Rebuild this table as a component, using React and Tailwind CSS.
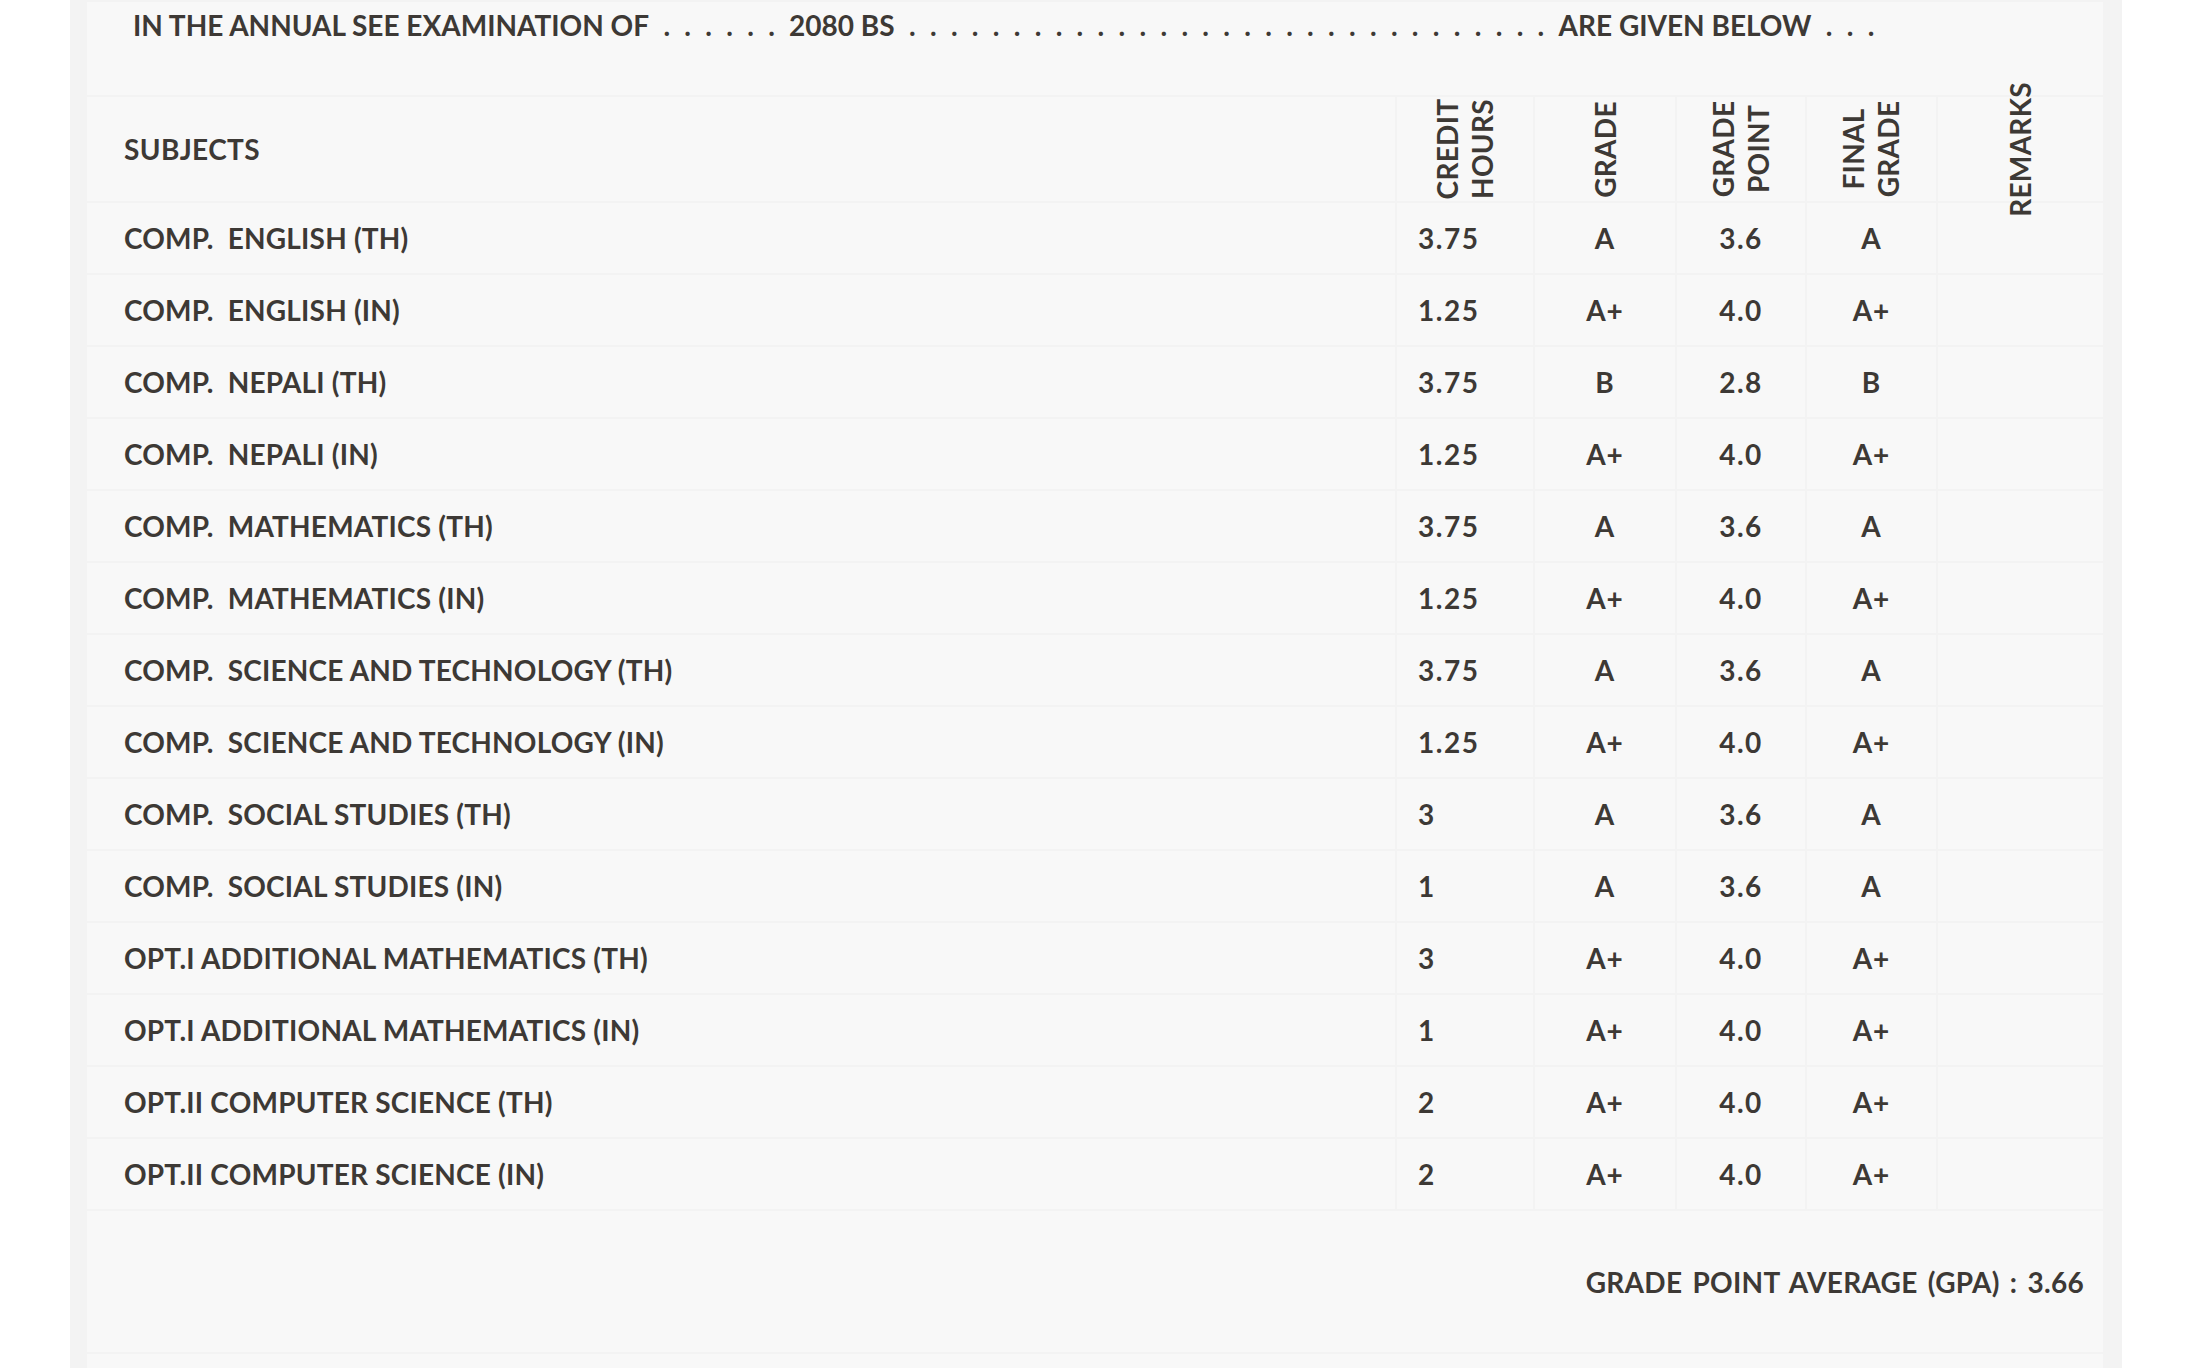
import React from "react";

const rows = [
  ["COMP.\u2002ENGLISH (TH)", "3.75", "A", "3.6", "A"],
  ["COMP.\u2002ENGLISH (IN)", "1.25", "A+", "4.0", "A+"],
  ["COMP.\u2002NEPALI (TH)", "3.75", "B", "2.8", "B"],
  ["COMP.\u2002NEPALI (IN)", "1.25", "A+", "4.0", "A+"],
  ["COMP.\u2002MATHEMATICS (TH)", "3.75", "A", "3.6", "A"],
  ["COMP.\u2002MATHEMATICS (IN)", "1.25", "A+", "4.0", "A+"],
  ["COMP.\u2002SCIENCE AND TECHNOLOGY (TH)", "3.75", "A", "3.6", "A"],
  ["COMP.\u2002SCIENCE AND TECHNOLOGY (IN)", "1.25", "A+", "4.0", "A+"],
  ["COMP.\u2002SOCIAL STUDIES (TH)", "3", "A", "3.6", "A"],
  ["COMP.\u2002SOCIAL STUDIES (IN)", "1", "A", "3.6", "A"],
  ["OPT.I ADDITIONAL MATHEMATICS (TH)", "3", "A+", "4.0", "A+"],
  ["OPT.I ADDITIONAL MATHEMATICS (IN)", "1", "A+", "4.0", "A+"],
  ["OPT.II COMPUTER SCIENCE (TH)", "2", "A+", "4.0", "A+"],
  ["OPT.II COMPUTER SCIENCE (IN)", "2", "A+", "4.0", "A+"],
];

function Dots({ n }) {
  const s = " " + Array.from({ length: n }, () => ".").join(" ") + " ";
  return <span className="[word-spacing:7.5px]">{s}</span>;
}

function RotHead({ lines }) {
  return (
    <th className="h-[104px] p-0 align-middle bg-[#f8f8f8]">
      <div className="flex h-full items-center justify-center">
        <div className="-rotate-90 whitespace-nowrap text-center text-[28px] leading-[35px] font-bold tracking-[0.3px]">
          {lines.map((l, i) => (
            <div key={i}>{l}</div>
          ))}
        </div>
      </div>
    </th>
  );
}

export default function App() {
  return (
    <div className="h-[1368px] overflow-hidden bg-white pl-[70px] pr-[69px] font-['Lato',sans-serif] text-[#3d3935]">
      <div className="h-full bg-[#f3f3f3] pl-[15px] pr-[17px]">
        <table className="table-fixed border-separate border-spacing-[2px] w-[2020px] text-[28px] font-bold">
          <colgroup>
            <col className="w-[1308px]" />
            <col className="w-[136px]" />
            <col className="w-[140px]" />
            <col className="w-[128px]" />
            <col className="w-[129px]" />
            <col className="w-[165px]" />
          </colgroup>
          <tbody>
            <tr>
              <td colSpan={6} className="h-[93px] bg-[#f8f8f8] pl-[46px] pt-[6px] align-top leading-[34px] whitespace-pre">
                IN THE ANNUAL SEE EXAMINATION OF<Dots n={6} />2080 BS<Dots n={31} />ARE GIVEN BELOW<Dots n={3} />
              </td>
            </tr>
            <tr>
              <th className="h-[104px] bg-[#f8f8f8] pl-[37px] text-left align-middle font-bold tracking-[0.4px]">SUBJECTS</th>
              <RotHead lines={["CREDIT", "HOURS"]} />
              <RotHead lines={["GRADE"]} />
              <RotHead lines={["GRADE", "POINT"]} />
              <RotHead lines={["FINAL", "GRADE"]} />
              <RotHead lines={["REMARKS"]} />
            </tr>
            {rows.map((r, i) => (
              <tr key={i}>
                <td className="h-[70px] bg-[#f8f8f8] pl-[37px] align-middle whitespace-nowrap tracking-[0.2px]">{r[0]}</td>
                <td className="h-[70px] bg-[#f8f8f8] pl-[21px] align-middle tracking-[1.5px]">{r[1]}</td>
                <td className="h-[70px] bg-[#f8f8f8] text-center align-middle tracking-[1px]">{r[2]}</td>
                <td className="h-[70px] bg-[#f8f8f8] text-center align-middle tracking-[1.5px]">{r[3]}</td>
                <td className="h-[70px] bg-[#f8f8f8] text-center align-middle tracking-[1px]">{r[4]}</td>
                <td className="h-[70px] bg-[#f8f8f8]"></td>
              </tr>
            ))}
            <tr>
              <td colSpan={6} className="h-[141px] bg-[#f8f8f8] pr-[19px] text-right align-middle tracking-[0.3px] [word-spacing:3px]">
                GRADE POINT AVERAGE (GPA) : 3.66
              </td>
            </tr>
            <tr>
              <td colSpan={6} className="h-[70px] bg-[#f8f8f8]"></td>
            </tr>
          </tbody>
        </table>
      </div>
    </div>
  );
}
